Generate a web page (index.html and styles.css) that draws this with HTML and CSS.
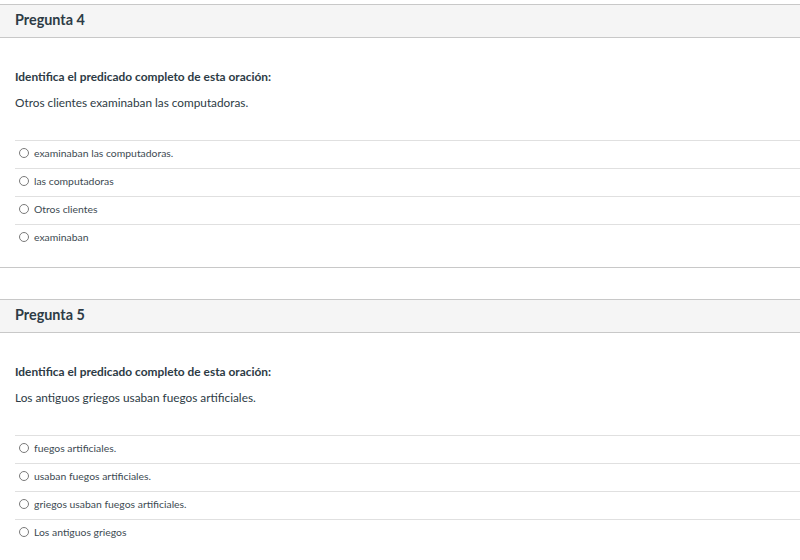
FILE: index.html
```html
<!DOCTYPE html>
<html lang="es">
<head>
<meta charset="utf-8">
<title>Preguntas</title>
<link rel="stylesheet" href="styles.css">
</head>
<body>
<div class="page">
  <section class="question">
    <div class="q-header">Pregunta 4</div>
    <div class="q-body">
      <p class="prompt">Identifica el predicado completo de esta oración:</p>
      <p class="sentence">Otros clientes examinaban las computadoras.</p>
      <ul class="answers">
        <li class="answer"><span class="radio"></span><span>examinaban las computadoras.</span></li>
        <li class="answer"><span class="radio"></span><span>las computadoras</span></li>
        <li class="answer"><span class="radio"></span><span>Otros clientes</span></li>
        <li class="answer"><span class="radio"></span><span>examinaban</span></li>
      </ul>
    </div>
  </section>
  <section class="question">
    <div class="q-header">Pregunta 5</div>
    <div class="q-body">
      <p class="prompt">Identifica el predicado completo de esta oración:</p>
      <p class="sentence">Los antiguos griegos usaban fuegos artificiales.</p>
      <ul class="answers">
        <li class="answer"><span class="radio"></span><span>fuegos artificiales.</span></li>
        <li class="answer"><span class="radio"></span><span>usaban fuegos artificiales.</span></li>
        <li class="answer"><span class="radio"></span><span>griegos usaban fuegos artificiales.</span></li>
        <li class="answer"><span class="radio"></span><span>Los antiguos griegos</span></li>
      </ul>
    </div>
  </section>
</div>
</body>
</html>
```
FILE: styles.css
```css
html, body {
  margin: 0;
  padding: 0;
  background: #ffffff;
}
body {
  font-family: Lato, "Liberation Sans", sans-serif;
  color: #2d3b45;
  overflow: hidden;
}
.page {
  padding-top: 4px;
}
.question {
  border-top: 1px solid #c8c8c8;
  border-bottom: 1px solid #c8c8c8;
  margin-bottom: 31px;
}
.q-header {
  height: 33px;
  box-sizing: border-box;
  background: #f5f5f5;
  border-bottom: 1px solid #c8c8c8;
  padding: 0 15px 3px;
  display: flex;
  align-items: center;
  font-size: 14.4px;
  font-weight: 700;
}
.q-body {
  padding: 0 0 15px 15px;
}
.prompt {
  margin: 32px 0 0;
  font-size: 11.9px;
  line-height: 14px;
  font-weight: 700;
}
.sentence {
  margin: 11px 0 0;
  font-size: 11.8px;
  line-height: 16px;
}
.answers {
  list-style: none;
  margin: 29px 0 0;
  padding: 0;
}
.answer {
  display: flex;
  align-items: center;
  height: 28px;
  box-sizing: border-box;
  padding-bottom: 3px;
  border-top: 1px solid #e0e0e0;
  font-size: 10.4px;
  color: #3d4a52;
}
.radio {
  width: 8px;
  height: 8px;
  border: 1px solid #7a7a7a;
  border-radius: 50%;
  margin: 0 5px 0 4px;
  flex: none;
}
```
